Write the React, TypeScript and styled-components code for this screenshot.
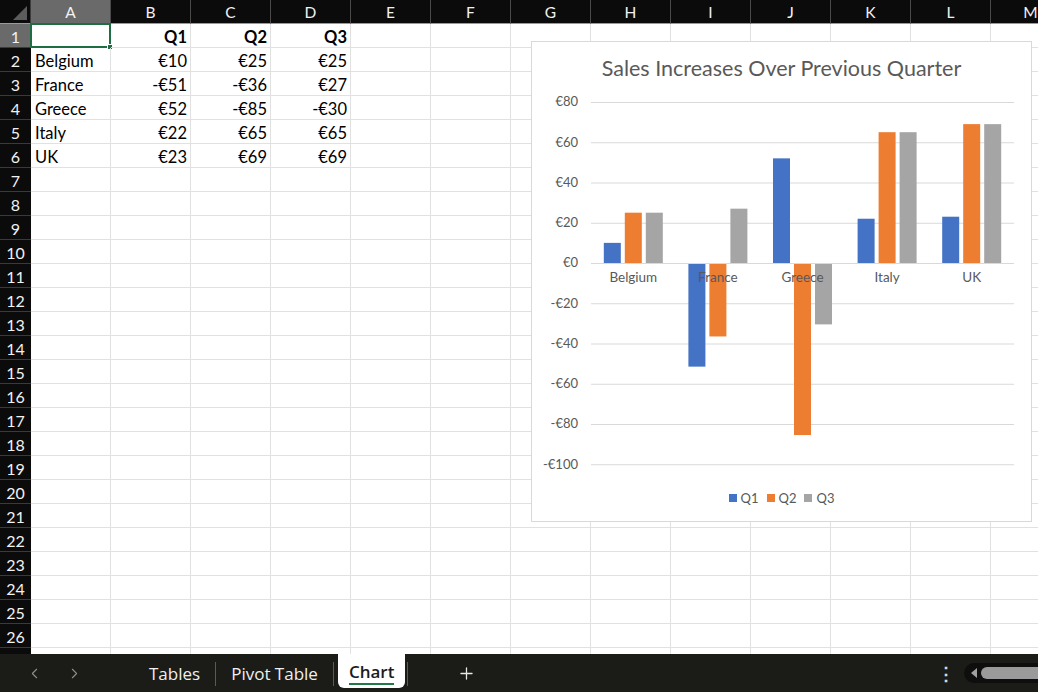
import React from "react";
import styled, { createGlobalStyle } from "styled-components";
import { ChevronLeft, ChevronRight, Plus } from "lucide-react";

const GlobalStyle = createGlobalStyle`
  html, body {
    margin: 0;
    padding: 0;
    background: #ffffff;
    overflow: hidden;
  }
  * {
    box-sizing: border-box;
  }
`;

const COLS = ["A", "B", "C", "D", "E", "F", "G", "H", "I", "J", "K", "L", "M"];
const ROW_COUNT = 27;

// sheet data, keyed by row then column index
const DATA: Record<number, string[]> = {
  1: ["", "Q1", "Q2", "Q3"],
  2: ["Belgium", "€10", "€25", "€25"],
  3: ["France", "-€51", "-€36", "€27"],
  4: ["Greece", "€52", "-€85", "-€30"],
  5: ["Italy", "€22", "€65", "€65"],
  6: ["UK", "€23", "€69", "€69"],
};

const SERIES = [
  { name: "Q1", color: "#4472c4" },
  { name: "Q2", color: "#ed7d31" },
  { name: "Q3", color: "#a5a5a5" },
];
const CATEGORIES = [
  { name: "Belgium", values: [10, 25, 25] },
  { name: "France", values: [-51, -36, 27] },
  { name: "Greece", values: [52, -85, -30] },
  { name: "Italy", values: [22, 65, 65] },
  { name: "UK", values: [23, 69, 69] },
];
const TICKS = [80, 60, 40, 20, 0, -20, -40, -60, -80, -100];

const App: React.FC = () => {
  return (
    <Wrap>
      <GlobalStyle />
      <Sheet>
        <Grid>
          <Corner />
          {COLS.map(c => (
            <ColHeader key={c} selected={c === "A"}>
              {c}
            </ColHeader>
          ))}
          {Array.from({ length: ROW_COUNT }, (_, r) => {
            const row = r + 1;
            const values = DATA[row] || [];
            return (
              <React.Fragment key={row}>
                {/* last row is only a sliver under the tab bar, no number shows */}
                <RowHeader selected={row === 1}>{row < ROW_COUNT ? row : ""}</RowHeader>
                {COLS.map((c, ci) => (
                  <Cell key={c} numeric={ci > 0} bold={row === 1}>
                    {values[ci] || ""}
                    {row === 1 && ci === 0 && (
                      <Selection>
                        <Handle />
                      </Selection>
                    )}
                  </Cell>
                ))}
              </React.Fragment>
            );
          })}
        </Grid>
        <ChartBox>
          <ChartTitle>Sales Increases Over Previous Quarter</ChartTitle>
          <Plot />
          <Legend>
            {SERIES.map(s => (
              <LegendItem key={s.name}>
                <Swatch color={s.color} />
                {s.name}
              </LegendItem>
            ))}
          </Legend>
        </ChartBox>
      </Sheet>
      <TabBar>
        <Nav>
          <NavArrow>
            <ChevronLeft size={17} strokeWidth={1.5} />
          </NavArrow>
          <NavArrow>
            <ChevronRight size={17} strokeWidth={1.5} />
          </NavArrow>
        </Nav>
        <Tabs>
          <Tab>Tables</Tab>
          <Sep />
          <Tab>Pivot Table</Tab>
          <Sep />
          <Tab active>Chart</Tab>
          <Sep />
          <AddTab>
            <Plus size={19} strokeWidth={1.6} />
          </AddTab>
        </Tabs>
        <Spacer />
        <Dots>⋮</Dots>
        <Scroll>
          <ScrollArrow />
          <ScrollThumb />
        </Scroll>
      </TabBar>
    </Wrap>
  );
};

const Plot: React.FC = () => {
  const left = 59;
  const right = 482;
  const zeroY = 183;
  const k = 2.0125;
  const groupW = (right - left) / CATEGORIES.length;
  const y = (v: number) => zeroY - v * k;
  return (
    <PlotSvg width={500} height={401} viewBox="0 0 500 401">
      {TICKS.map(t => (
        <g key={t}>
          <line x1={left} x2={right} y1={y(t) + 0.5} y2={y(t) + 0.5} stroke="#d9d9d9" strokeWidth={1} />
          <text x={46} y={y(t) + 1} textAnchor="end" dominantBaseline="middle" fontSize={13} fill="#595959">
            {t < 0 ? `-€${-t}` : `€${t}`}
          </text>
        </g>
      ))}
      {CATEGORIES.map((cat, i) => {
        const cx = left + groupW * (i + 0.5);
        return (
          <g key={cat.name}>
            {cat.values.map((v, si) => {
              const x = cx - 29.5 + si * 21;
              const top = v >= 0 ? y(v) : zeroY + 1;
              const h = Math.abs(v) * k;
              return <rect key={si} x={x} y={top} width={17} height={h} fill={SERIES[si].color} />;
            })}
            <text x={cx} y={zeroY + 16} textAnchor="middle" dominantBaseline="middle" fontSize={13.5} fill="#595959">
              {cat.name}
            </text>
          </g>
        );
      })}
    </PlotSvg>
  );
};

const Wrap = styled.div`
  width: 1038px;
  height: 692px;
  display: flex;
  flex-direction: column;
  font-family: Lato, "Open Sans", sans-serif;
  overflow: hidden;
`;

const Sheet = styled.div`
  flex: none;
  height: 654px;
  position: relative;
  overflow: hidden;
`;

const Grid = styled.div`
  display: grid;
  grid-template-columns: 31px repeat(13, 80px);
  grid-auto-rows: 24px;
  width: 1071px;
`;

const Corner = styled.div`
  background: #0b0b0b;
  border-bottom: 1px solid #9a9a9a;
  border-right: 1px solid #3c3c3c;
  position: relative;
  &::after {
    content: "";
    position: absolute;
    right: 3px;
    bottom: 3px;
    border-style: solid;
    border-width: 0 0 14px 14px;
    border-color: transparent transparent #5c5c5c transparent;
  }
`;

const ColHeader = styled.div<{ selected?: boolean }>`
  background: ${p => (p.selected ? "#6a6a6a" : "#0b0b0b")};
  color: #f2f2f2;
  border-right: 1px solid #4a4a4a;
  border-bottom: 1px solid #9a9a9a;
  font-size: 15.5px;
  padding-top: 1px;
  display: flex;
  align-items: center;
  justify-content: center;
`;

const RowHeader = styled.div<{ selected?: boolean }>`
  background: ${p => (p.selected ? "#6a6a6a" : "#0b0b0b")};
  color: #f2f2f2;
  border-bottom: 1px solid #3a3a3a;
  font-size: 16px;
  padding-top: 2px;
  display: flex;
  align-items: center;
  justify-content: center;
`;

const Cell = styled.div<{ numeric?: boolean; bold?: boolean }>`
  position: relative;
  border-right: 1px solid #e1e1e1;
  border-bottom: 1px solid #e1e1e1;
  font-size: 16.5px;
  font-weight: ${p => (p.bold ? 700 : 400)};
  color: #000;
  padding: 2px 3px 0 4px;
  display: flex;
  align-items: center;
  justify-content: ${p => (p.numeric ? "flex-end" : "flex-start")};
  white-space: nowrap;
`;

const Selection = styled.div`
  position: absolute;
  left: -1px;
  top: -1px;
  right: -1px;
  bottom: -1px;
  border: 2px solid #1f6e43;
`;

const Handle = styled.div`
  position: absolute;
  right: -4px;
  bottom: -4px;
  width: 6px;
  height: 6px;
  background: #1f6e43;
  border: 1px solid #fff;
`;

const ChartBox = styled.div`
  position: absolute;
  left: 531px;
  top: 41px;
  width: 501px;
  height: 481px;
  background: #fff;
  border: 1px solid #d9d9d9;
  display: flex;
  flex-direction: column;
`;

const ChartTitle = styled.div`
  flex: none;
  height: 38px;
  padding-top: 14px;
  text-align: center;
  font-size: 21.5px;
  line-height: 24px;
  color: #595959;
`;

const PlotSvg = styled.svg`
  display: block;
  flex: none;
  font-family: Lato, "Open Sans", sans-serif;
`;

const Legend = styled.div`
  flex: none;
  height: 33px;
  display: flex;
  align-items: center;
  justify-content: center;
  gap: 8px;
`;

const LegendItem = styled.div`
  display: flex;
  align-items: center;
  gap: 4px;
  font-size: 13px;
  color: #595959;
`;

const Swatch = styled.span<{ color: string }>`
  display: inline-block;
  width: 8px;
  height: 8px;
  background: ${p => p.color};
`;

const TabBar = styled.div`
  flex: 1;
  background: #1b1b17;
  display: flex;
  align-items: flex-start;
  font-family: "Open Sans", Lato, sans-serif;
`;

const Nav = styled.div`
  width: 134px;
  height: 38px;
  display: flex;
  align-items: center;
  padding-left: 26px;
  gap: 23px;
`;

const NavArrow = styled.span`
  width: 17px;
  height: 17px;
  color: #8e8e8e;
  display: flex;
`;

const Tabs = styled.div`
  display: flex;
  align-items: flex-start;
  height: 38px;
`;

const Tab = styled.div<{ active?: boolean }>`
  height: ${p => (p.active ? "34px" : "38px")};
  padding: ${p => (p.active ? "0 11px" : "0 15px")};
  margin: ${p => (p.active ? "0 2px 0 4px" : "0")};
  display: flex;
  align-items: center;
  font-size: 17px;
  font-weight: ${p => (p.active ? 600 : 400)};
  color: ${p => (p.active ? "#1b1b1b" : "#f0f0f0")};
  background: ${p => (p.active ? "#ffffff" : "transparent")};
  border-radius: 0 0 6px 6px;
  position: relative;
  ${p =>
    p.active
      ? `&::after {
          content: "";
          position: absolute;
          left: 11px;
          right: 11px;
          bottom: 3px;
          height: 2px;
          background: #1f7a45;
        }`
      : ``}
`;

const Sep = styled.div`
  width: 1px;
  height: 24px;
  margin-top: 8px;
  background: #5a5a5a;
`;

const AddTab = styled.div`
  width: 116px;
  height: 38px;
  display: flex;
  align-items: center;
  justify-content: center;
  color: #e8e8e8;
`;

const Spacer = styled.div`
  flex: 1;
`;

const Dots = styled.div`
  height: 38px;
  width: 20px;
  margin-right: 8px;
  display: flex;
  align-items: center;
  justify-content: center;
  color: #d8d8d8;
  font-size: 18px;
  font-weight: 700;
`;

const Scroll = styled.div`
  margin-top: 9px;
  width: 74px;
  height: 20px;
  background: #0e0e0e;
  border-radius: 10px 0 0 10px;
  display: flex;
  align-items: center;
  padding-left: 7px;
  gap: 4px;
`;

const ScrollArrow = styled.div`
  width: 0;
  height: 0;
  border-style: solid;
  border-width: 5px 6px 5px 0;
  border-color: transparent #a0a0a0 transparent transparent;
`;

const ScrollThumb = styled.div`
  flex: 1;
  height: 12px;
  background: #9a9a9a;
  border-radius: 6px 0 0 6px;
`;

export default App;
